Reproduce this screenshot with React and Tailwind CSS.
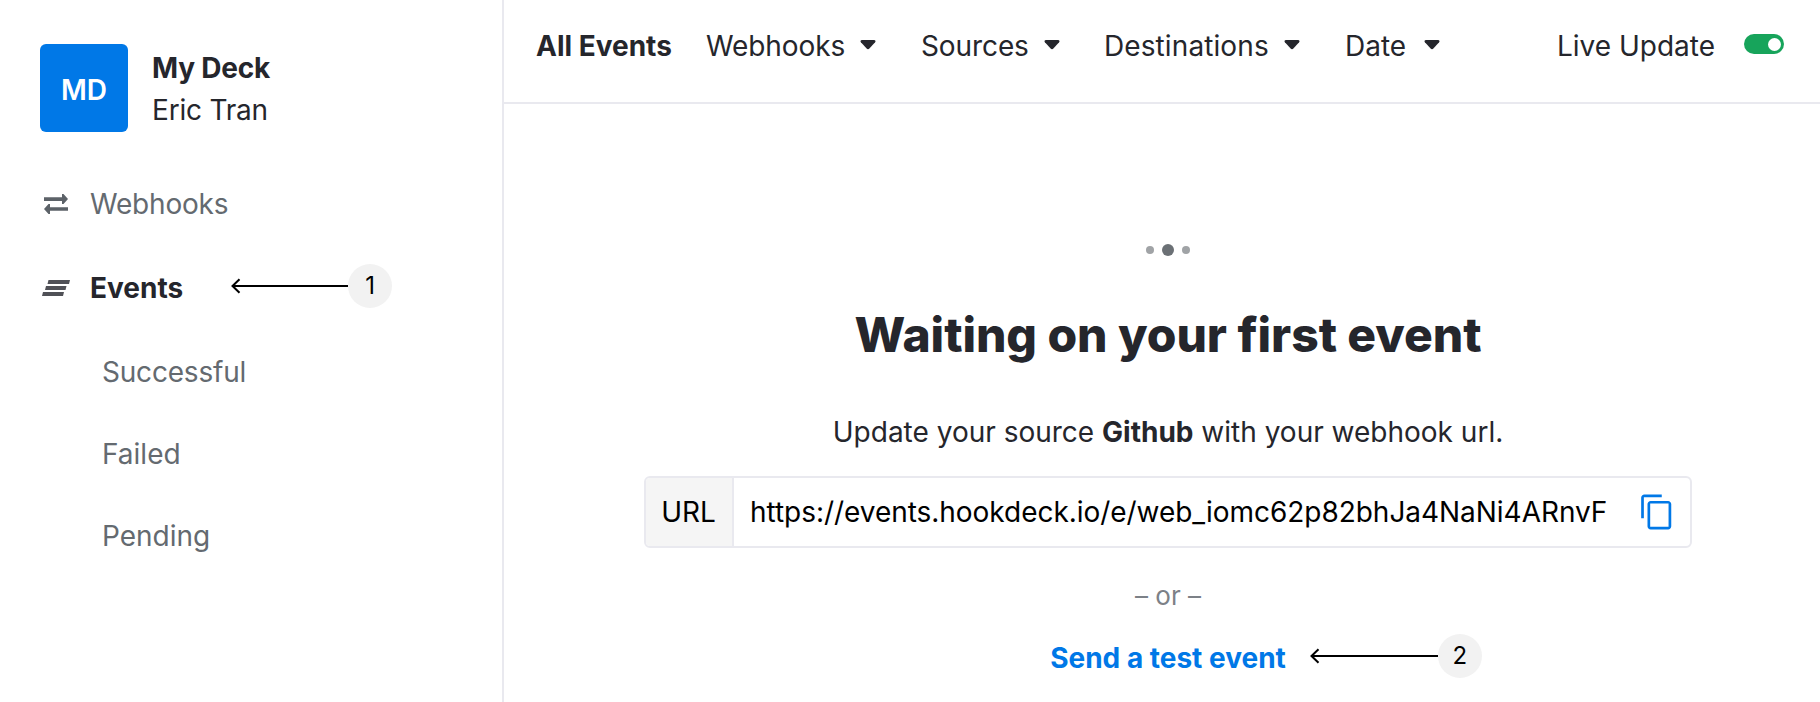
import React from "react";

function Caret({ className = "" }) {
  return (
    <svg className={"mt-[15px] shrink-0 " + className} width="16" height="10" viewBox="0 0 16 10" fill="#25262c">
      <path d="M2 0h12c1.4 0 2 1.2 1.1 2.2L9.6 8.3a2.2 2.2 0 0 1-3.2 0L.9 2.2C0 1.2 .6 0 2 0z" />
    </svg>
  );
}

function Marker({ label, className = "", length }) {
  return (
    <div className={"flex items-center " + className}>
      <svg width={length} height="16" viewBox={`0 0 ${length} 16`} fill="none" stroke="#000" strokeWidth="2">
        <path d={`M1.5 8H${length}`} />
        <path d="M8.5 1.2L1.5 8l7 6.8" />
      </svg>
      <span className="flex size-11 items-center justify-center rounded-full bg-[#f2f2f2] text-2xl text-black">
        {label}
      </span>
    </div>
  );
}

function Sidebar() {
  return (
    <aside className="h-full w-[504px] shrink-0 border-r-2 border-[#e9e9ef] pt-11">
      <div className="flex h-[88px] pl-10">
        <div className="flex size-[88px] items-center justify-center rounded-md bg-[#0078e7] pt-1 text-[28px] font-semibold text-white">
          MD
        </div>
        <div className="pt-[3px] pl-6 text-[28px] leading-[42px]">
          <div className="font-bold tracking-[-0.2px]">My Deck</div>
          <div className="tracking-[-0.2px]">Eric Tran</div>
        </div>
      </div>
      <nav className="pt-[51px] text-[28px] leading-[42px] tracking-[-0.2px] text-[#646a70]">
        <div className="flex h-[42px] items-center pl-11">
          <svg width="24" height="20" viewBox="0 0 24 20" fill="#5c6268">
            <path d="M0 3.200h18V0h1.500L24 5l-4.500 5H18V7H0zM24 13.200H6V10H4.500L0 15l4.500 5H6v-3.200h18z" />
          </svg>
          <span className="pl-[22px]">Webhooks</span>
        </div>
        <div className="mt-[42px] flex h-[42px] items-center pl-[42px] font-bold text-[#25262c]">
          <svg width="28" height="16" viewBox="0 0 28 16" fill="#505157">
            <path d="M6.500 0H28l-1 4H5.500zM4 6H24.500l-1 4H3zM1 12h21l-1 4H0z" />
          </svg>
          <span className="w-[95px] pl-5 tracking-normal">Events</span>
          <Marker label="1" length={117} className="-mt-1 ml-[66px] font-normal" />
        </div>
        <div className="flex flex-col gap-10 pt-[42px] pl-[102px]">
          <div>Successful</div>
          <div className="tracking-normal">Failed</div>
          <div className="tracking-normal">Pending</div>
        </div>
      </nav>
    </aside>
  );
}

function Header() {
  return (
    <header className="flex h-[104px] border-b-2 border-[#e9e9ef] pt-[25px] pl-8 text-[28px] leading-[42px]">
      <div className="w-[170px] font-bold">All Events</div>
      <div className="flex w-[215px] tracking-[-0.1px]">
        Webhooks
        <Caret className="ml-[15px]" />
      </div>
      <div className="flex w-[183px] tracking-[-0.1px]">
        Sources
        <Caret className="ml-[15px]" />
      </div>
      <div className="flex w-[241px] tracking-[0.1px]">
        Destinations
        <Caret className="ml-[15px]" />
      </div>
      <div className="flex">
        Date
        <Caret className="ml-[18px]" />
      </div>
      <div className="mr-9 ml-auto flex">
        Live Update
        <span className="mt-[9px] ml-[29px] flex h-5 w-10 items-center justify-end rounded-full bg-[#17a45b] pr-[3px]">
          <span className="size-[13px] rounded-full bg-white" />
        </span>
      </div>
    </header>
  );
}

function EmptyState() {
  return (
    <main className="flex flex-col items-center pt-[140px] pl-3 text-[28px] leading-[42px]">
      <div className="flex h-3 items-center gap-2">
        <span className="size-2 rounded-full bg-[#a0a3a6]" />
        <span className="size-3 rounded-full bg-[#6b7075]" />
        <span className="size-2 rounded-full bg-[#a0a3a6]" />
      </div>
      <h1 className="mt-[49px] text-[48px] leading-[60px] font-extrabold tracking-[-0.06px]">
        Waiting on your first event
      </h1>
      <p className="mt-[46px]">
        Update your source <b className="font-bold">Github</b> with your webhook url.
      </p>
      <div className="mt-[23px] flex h-[72px] w-[1048px] items-center overflow-hidden rounded-md border-2 border-[#e9e9ef] text-black">
        <span className="flex h-full w-[88px] items-center justify-center border-r-2 border-[#e9e9ef] bg-[#f5f5f5] pr-px">
          URL
        </span>
        <span className="pl-4 tracking-[-0.04px]">https://events.hookdeck.io/e/web_iomc62p82bhJa4NaNi4ARnvF</span>
        <svg className="mr-[14px] ml-auto" width="38" height="38" viewBox="0 0 24 24" fill="#0078e7">
          <path d="M15 1H4c-1.100 0-2 .9-2 2v13h1.700V2.700H15V1zm4 4H8c-1.100 0-2 .9-2 2v14c0 1.100.9 2 2 2h11c1.100 0 2-.9 2-2V7c0-1.100-.9-2-2-2zm.3 16.300H7.700V6.700h11.600v14.600z" />
        </svg>
      </div>
      <div className="mt-[27px] text-[26px] text-[#7c8187]">– or –</div>
      <div className="relative mt-5 font-bold text-[#0078e7]">
        Send a test event
        <Marker label="2" length={128} className="absolute top-[-3px] left-full pl-6 font-normal" />
      </div>
    </main>
  );
}

export default function App() {
  return (
    <div className="flex h-[702px] w-[1820px] overflow-hidden bg-white font-[Inter,sans-serif] text-[#25262c]">
      <Sidebar />
      <div className="min-w-0 flex-1">
        <Header />
        <EmptyState />
      </div>
    </div>
  );
}
